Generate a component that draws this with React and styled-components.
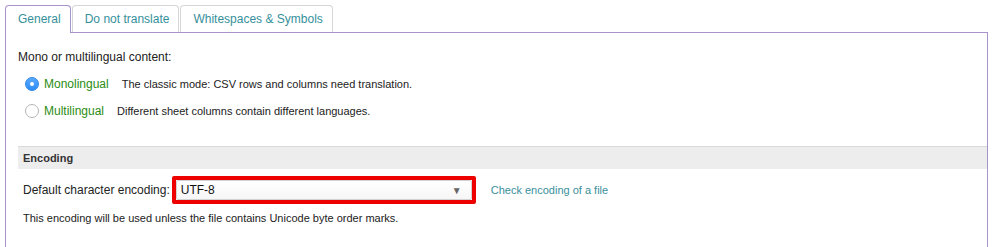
import React from 'react';
import styled, { createGlobalStyle } from 'styled-components';

const GlobalStyle = createGlobalStyle`
  html, body {
    margin: 0;
    padding: 0;
    background: #ffffff;
    overflow: hidden;
  }
  body {
    font-family: "Liberation Sans", Arial, Helvetica, sans-serif;
    color: #222;
  }
`;

const Page = styled.div`
  padding: 5px 6px 0 5px;
`;

const Tabs = styled.div`
  display: flex;
  align-items: flex-end;
`;

const Tab = styled.div`
  line-height: 26px;
  padding: 0 9px 0 12px;
  font-size: 12px;
  color: #35909b;
  background: #fff;
  border: 1px solid ${p => (p.$active ? '#a793c9' : '#d6d6d6')};
  border-bottom: none;
  border-radius: 4px 4px 0 0;
  margin-right: 1px;
  margin-bottom: ${p => (p.$active ? '-1px' : '0')};
  height: ${p => (p.$active ? '27px' : '26px')};
  position: relative;
  z-index: ${p => (p.$active ? 1 : 0)};
`;

const Panel = styled.div`
  border: 1px solid #a793c9;
  border-bottom: none;
  padding: 16px 0 40px 12px;
  min-height: 260px;
`;

const Title = styled.div`
  font-size: 12px;
  line-height: 16px;
`;

const RadioList = styled.div`
  display: flex;
  flex-direction: column;
  gap: 5px;
  margin-top: 8px;
  padding-left: 7px;
`;

const RadioRow = styled.label`
  display: flex;
  align-items: center;
  height: 22px;
`;

const RadioDot = styled.span`
  width: 14px;
  height: 14px;
  box-sizing: border-box;
  border-radius: 50%;
  display: flex;
  align-items: center;
  justify-content: center;
  background: ${p => (p.$checked ? 'linear-gradient(#5aaaff, #2d8cf5)' : '#fff')};
  border: 1px solid ${p => (p.$checked ? '#2f86e8' : '#b4b4b4')};
  &::after {
    content: '';
    width: 4px;
    height: 4px;
    border-radius: 50%;
    background: #fff;
    display: ${p => (p.$checked ? 'block' : 'none')};
  }
`;

const RadioLabel = styled.span`
  font-size: 12px;
  color: #2b8c14;
  margin-left: 5px;
`;

const RadioHint = styled.span`
  font-size: 11px;
  color: #222;
  margin-left: 13px;
`;

const SectionHeader = styled.div`
  margin-top: 24px;
  background: #ededed;
  border-top: 1px solid #d9d9d9;
  height: 22px;
  line-height: 23px;
  padding-left: 5px;
  font-size: 11px;
  font-weight: bold;
  color: #333;
`;

const FieldRow = styled.div`
  display: flex;
  align-items: center;
  margin-top: 7px;
  padding-left: 5px;
`;

const FieldLabel = styled.span`
  font-size: 12px;
  color: #222;
  margin-right: 2px;
`;

const Highlight = styled.div`
  border: 4px solid #ee0000;
  border-radius: 2px;
  width: 296px;
  height: 20px;
  display: flex;
`;

const Select = styled.div`
  flex: 1;
  display: flex;
  align-items: center;
  justify-content: space-between;
  background: linear-gradient(#ffffff, #f6f6f6);
  border: 1px solid #d2d2d2;
  border-radius: 2px;
  padding: 0 9px 0 4px;
  font-size: 12px;
  color: #111;
`;

const Arrow = styled.span`
  font-size: 10px;
  color: #666;
`;

const Link = styled.a`
  font-size: 11px;
  color: #3a8f9c;
  text-decoration: none;
  margin-left: 15px;
`;

const Hint = styled.div`
  font-size: 11px;
  line-height: 14px;
  color: #222;
  margin-top: 7px;
  padding-left: 5px;
`;

export default function App() {
  return (
    <>
      <GlobalStyle />
      <Page>
        <Tabs>
          <Tab $active>General</Tab>
          <Tab>Do not translate</Tab>
          <Tab>Whitespaces &amp; Symbols</Tab>
        </Tabs>
        <Panel>
          <Title>Mono or multilingual content:</Title>
          <RadioList>
            <RadioRow>
              <RadioDot $checked />
              <RadioLabel>Monolingual</RadioLabel>
              <RadioHint>The classic mode: CSV rows and columns need translation.</RadioHint>
            </RadioRow>
            <RadioRow>
              <RadioDot />
              <RadioLabel>Multilingual</RadioLabel>
              <RadioHint>Different sheet columns contain different languages.</RadioHint>
            </RadioRow>
          </RadioList>
          <SectionHeader>Encoding</SectionHeader>
          <FieldRow>
            <FieldLabel>Default character encoding:</FieldLabel>
            <Highlight>
              <Select>
                <span>UTF-8</span>
                <Arrow>▼</Arrow>
              </Select>
            </Highlight>
            <Link href="#">Check encoding of a file</Link>
          </FieldRow>
          <Hint>This encoding will be used unless the file contains Unicode byte order marks.</Hint>
        </Panel>
      </Page>
    </>
  );
}
